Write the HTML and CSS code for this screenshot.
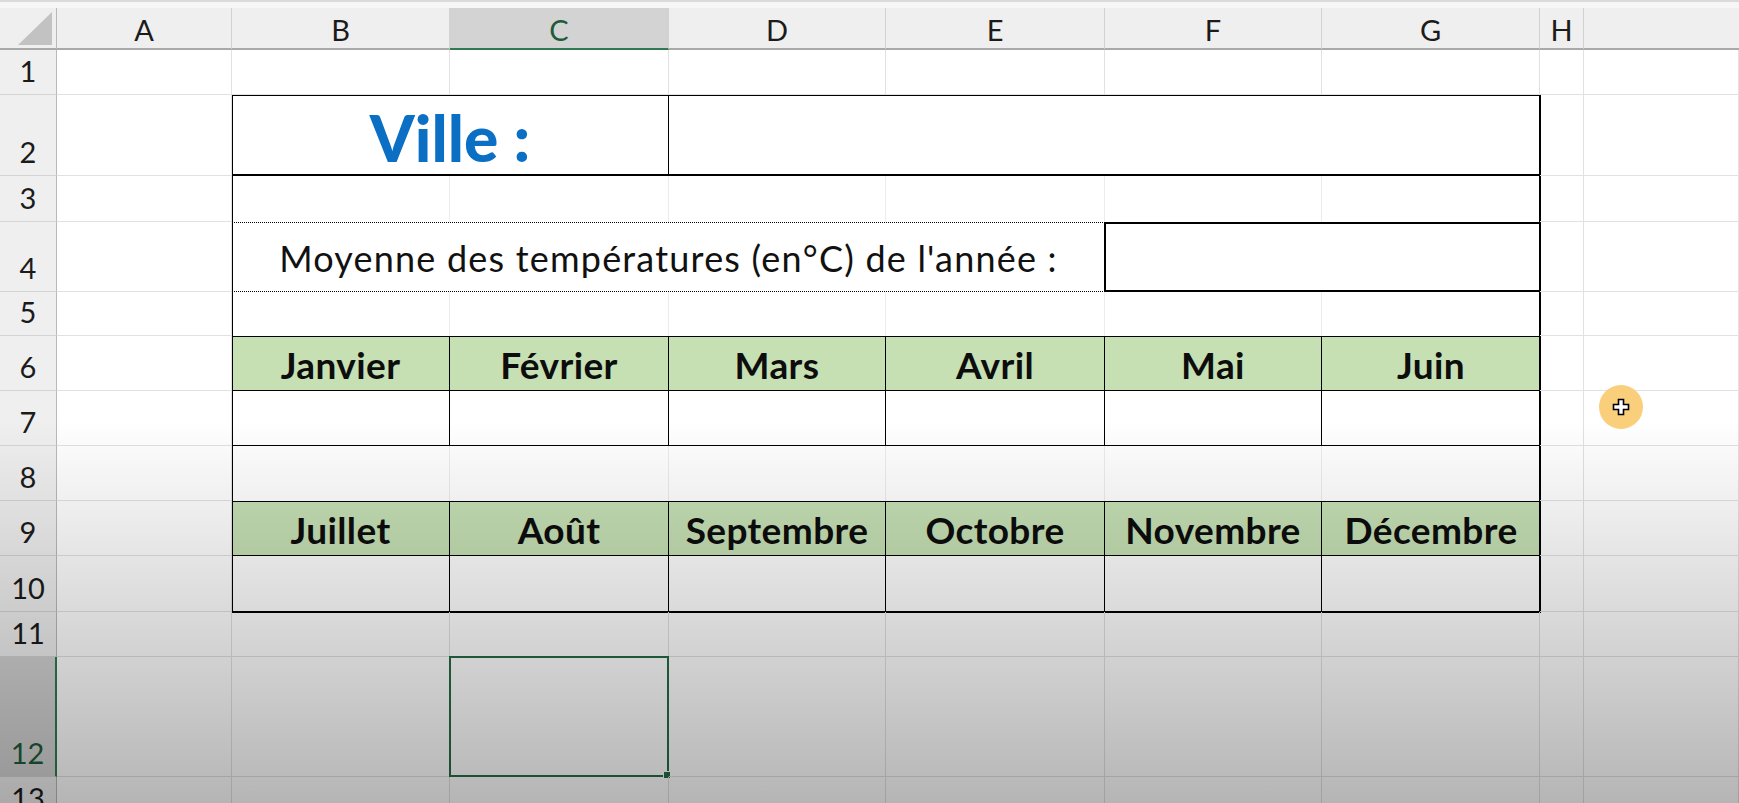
FILE: index.html
```html
<!DOCTYPE html>
<html lang="fr">
<head>
<meta charset="utf-8">
<title>Températures</title>
<link rel="stylesheet" href="styles.css">
</head>
<body>
<div class="topbar"></div>
<div class="sheet">
  <div class="corner"><span class="tri"></span></div>
  <div class="ch">A</div><div class="ch">B</div><div class="ch sel">C</div><div class="ch">D</div><div class="ch">E</div><div class="ch">F</div><div class="ch">G</div><div class="ch">H</div><div class="ch rest"></div>

  <div class="rh">1</div><div class="c"></div><div class="c"></div><div class="c"></div><div class="c"></div><div class="c"></div><div class="c"></div><div class="c"></div><div class="c"></div><div class="c"></div>

  <div class="table">
    <div class="t-ville">Ville :</div>
    <div class="t-city"></div>

    <div class="t-blank"></div><div class="t-blank"></div><div class="t-blank"></div><div class="t-blank"></div><div class="t-blank"></div><div class="t-blank last"></div>

    <div class="t-label">Moyenne des températures (en°C) de l'année :</div>
    <div class="t-avg"></div>

    <div class="t-blank"></div><div class="t-blank"></div><div class="t-blank"></div><div class="t-blank"></div><div class="t-blank"></div><div class="t-blank last"></div>

    <div class="t-month">Janvier</div><div class="t-month">Février</div><div class="t-month">Mars</div><div class="t-month">Avril</div><div class="t-month">Mai</div><div class="t-month last">Juin</div>
    <div class="t-val"></div><div class="t-val"></div><div class="t-val"></div><div class="t-val"></div><div class="t-val"></div><div class="t-val last"></div>

    <div class="t-blank"></div><div class="t-blank"></div><div class="t-blank"></div><div class="t-blank"></div><div class="t-blank"></div><div class="t-blank last"></div>

    <div class="t-month">Juillet</div><div class="t-month">Août</div><div class="t-month">Septembre</div><div class="t-month">Octobre</div><div class="t-month">Novembre</div><div class="t-month last">Décembre</div>
    <div class="t-val end"></div><div class="t-val end"></div><div class="t-val end"></div><div class="t-val end"></div><div class="t-val end"></div><div class="t-val end last"></div>
  </div>

  <div class="rh">2</div><div class="c"></div><div class="c"></div><div class="c"></div>
  <div class="rh">3</div><div class="c"></div><div class="c"></div><div class="c"></div>
  <div class="rh">4</div><div class="c"></div><div class="c"></div><div class="c"></div>
  <div class="rh">5</div><div class="c"></div><div class="c"></div><div class="c"></div>
  <div class="rh">6</div><div class="c"></div><div class="c"></div><div class="c"></div>
  <div class="rh">7</div><div class="c"></div><div class="c"></div><div class="c"></div>
  <div class="rh">8</div><div class="c"></div><div class="c"></div><div class="c"></div>
  <div class="rh">9</div><div class="c"></div><div class="c"></div><div class="c"></div>
  <div class="rh">10</div><div class="c"></div><div class="c"></div><div class="c"></div>

  <div class="rh">11</div><div class="c"></div><div class="c"></div><div class="c"></div><div class="c"></div><div class="c"></div><div class="c"></div><div class="c"></div><div class="c"></div><div class="c"></div>
  <div class="rh sel">12</div><div class="c"></div><div class="c"></div><div class="c active"><span class="handle"></span></div><div class="c"></div><div class="c"></div><div class="c"></div><div class="c"></div><div class="c"></div><div class="c"></div>
  <div class="rh">13</div><div class="c"></div><div class="c"></div><div class="c"></div><div class="c"></div><div class="c"></div><div class="c"></div><div class="c"></div><div class="c"></div><div class="c"></div>
</div>
<div class="shade"></div>
<div class="pointer">
  <svg width="18" height="18" viewBox="0 0 18 18"><path d="M6.5 1.5h5v5h5v5h-5v5h-5v-5h-5v-5h5z" fill="#fff" stroke="#000" stroke-width="1.6" stroke-linejoin="miter"/></svg>
</div>
</body>
</html>
```

FILE: styles.css
```css
html, body {
  margin: 0;
  padding: 0;
}
body {
  width: 1739px;
  height: 803px;
  overflow: hidden;
  position: relative;
  background: #ffffff;
  font-family: Lato, "Liberation Sans", sans-serif;
  color: #111;
}
.topbar {
  height: 8px;
  box-sizing: border-box;
  background: #f6f6f6;
  border-top: 2px solid #dadada;
}
.sheet {
  display: grid;
  grid-template-columns: 57px 175px 218px 219px 217px 219px 217px 218px 44px 1fr;
  grid-template-rows: 42px 45px 81px 46px 70px 44px 55px 55px 55px 55px 56px 45px 120px 45px;
}
.sheet > div {
  box-sizing: border-box;
}
.corner {
  background: #efefef;
  border-right: 1px solid #b9b9b9;
  border-bottom: 2px solid #a9a9a9;
  position: relative;
}
.tri {
  position: absolute;
  right: 4px;
  bottom: 3px;
  width: 34px;
  height: 33px;
  background: #c2c2c2;
  clip-path: polygon(100% 0, 100% 100%, 0 100%);
}
.ch {
  background: #efefef;
  border-right: 1px solid #d2d2d2;
  border-bottom: 2px solid #a9a9a9;
  display: flex;
  align-items: center;
  justify-content: center;
  font-size: 29px;
  color: #1b1b1b;
  padding-top: 2px;
}
.ch.sel {
  background: #d3d3d3;
  color: #1e5c38;
  border-bottom: 2px solid #2f7a52;
}
.ch.rest {
  border-right: none;
}
.rh {
  background: #efefef;
  border-right: 1px solid #b9b9b9;
  border-bottom: 1px solid #d4d4d4;
  display: flex;
  align-items: flex-end;
  justify-content: center;
  font-size: 29px;
  line-height: 1;
  padding-bottom: 9px;
  color: #1b1b1b;
}
.rh.sel {
  background: #d3d3d3;
  color: #1e5c38;
  border-right: 2px solid #2f7a52;
}
.c {
  border-right: 1px solid #e1e1e1;
  border-bottom: 1px solid #e1e1e1;
  position: relative;
}
.c.active {
  border: 2px solid #256b45;
  margin: -1px 0 0 -1px;
}
.handle {
  position: absolute;
  right: -4px;
  bottom: -4px;
  width: 6px;
  height: 6px;
  background: #256b45;
  border: 1px solid #fff;
}

/* table */
.table {
  grid-column: 3 / 9;
  grid-row: 3 / 12;
  display: grid;
  grid-template-columns: 218px 219px 217px 219px 217px 218px;
  grid-template-rows: 81px 46px 70px 44px 55px 55px 55px 55px 56px;
  background: #fff;
  outline: 2px solid #000;
  outline-offset: -1px;
}
.table > div {
  box-sizing: border-box;
}
.t-ville {
  grid-column: span 2;
  border-right: 1px solid #000;
  border-bottom: 2px solid #000;
  display: flex;
  align-items: center;
  justify-content: center;
  font-size: 64px;
  font-weight: 900;
  color: #0b6fc4;
  padding-top: 6px;
}
.t-city {
  grid-column: span 4;
  border-bottom: 2px solid #000;
}
.t-blank {
  border-right: 1px solid #ececec;
}
.t-blank.last,
.t-month.last,
.t-val.last {
  border-right: none;
}
.t-label {
  grid-column: span 4;
  border-top: 1px dotted #000;
  border-bottom: 1px dotted #000;
  display: flex;
  align-items: center;
  justify-content: center;
  font-size: 36px;
  letter-spacing: 1.2px;
  color: #111;
  padding-top: 2px;
}
.t-avg {
  grid-column: span 2;
  border-top: 2px solid #000;
  border-bottom: 2px solid #000;
  border-left: 2px solid #000;
  margin-left: -1px;
}
.t-month {
  background: #c6e0b4;
  border-top: 1px solid #000;
  border-right: 1px solid #000;
  border-bottom: 1px solid #000;
  display: flex;
  align-items: center;
  justify-content: center;
  font-size: 37px;
  font-weight: 700;
  letter-spacing: 0.4px;
  color: #0d0d0d;
  padding-top: 2px;
}
.t-val {
  border-right: 1px solid #000;
  border-bottom: 1px solid #000;
}
.t-val.end {
  border-bottom: none;
}

/* overlays */
.shade {
  position: absolute;
  left: 0;
  top: 0;
  width: 100%;
  height: 100%;
  pointer-events: none;
  background: linear-gradient(180deg, rgba(0,0,0,0) 0, rgba(0,0,0,0) 420px, rgba(0,0,0,0.29) 803px);
}
.pointer {
  position: absolute;
  left: 1599px;
  top: 385px;
  width: 44px;
  height: 44px;
  border-radius: 50%;
  background: #f9cf7b;
  display: flex;
  align-items: center;
  justify-content: center;
}
.pointer svg {
  display: block;
}
```
